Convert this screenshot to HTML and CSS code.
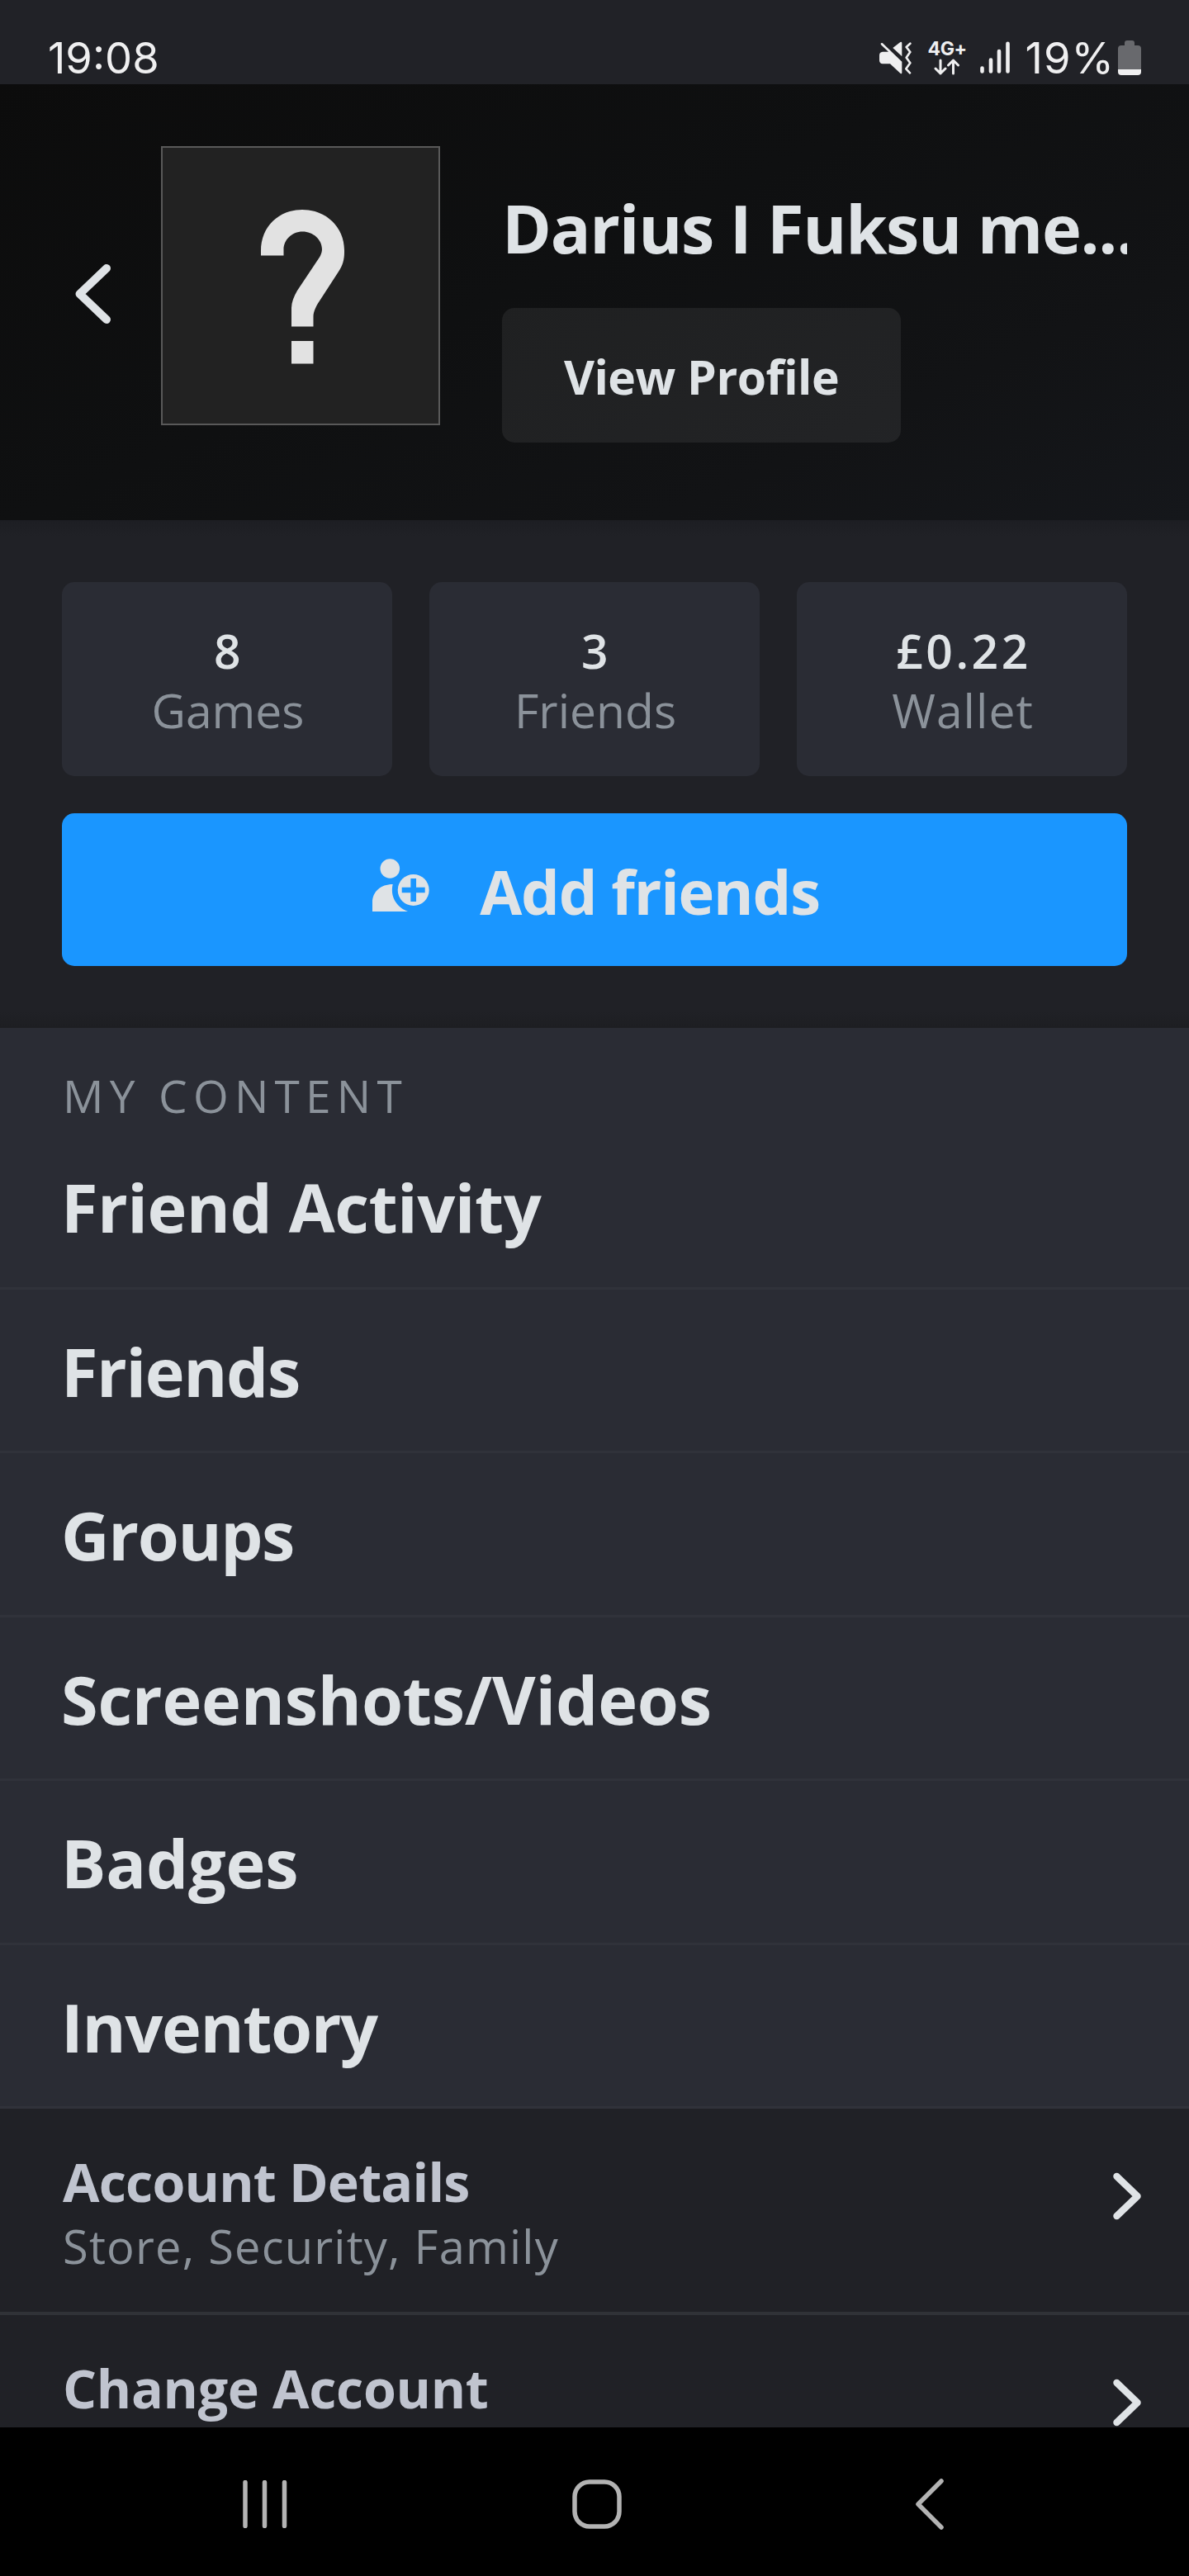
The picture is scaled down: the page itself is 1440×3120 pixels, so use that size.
FILE: index.html
```html
<!DOCTYPE html>
<html lang="en">
<head>
    <meta charset="UTF-8">
    <meta name="viewport" content="width=device-width, initial-scale=1.0">
    <title>Profile</title>
    <link rel="stylesheet" href="styles.css">
</head>
<body>
    <div class="screen">
        <div class="status-bar">
            <span class="clock">19:08</span>
            <div class="status-icons">
                <svg class="icon-mute" viewBox="75 58 120 120" width="40" height="40">
                    <path fill="#efeff0" d="M84 64Q86 63 90 68L157 132V173Q156 178 151 174L114 140H87Q75 139 75 127V109Q75 97 87 96H108L81 71Q78 64 84 64Z"/>
                    <path fill="#efeff0" d="M124 82L151 61Q156 58 157 64V113Z"/>
                    <path fill="none" stroke="#efeff0" stroke-width="8" stroke-linecap="round" stroke-linejoin="round" d="M187 66L173 79L187 97L173 117L187 137L172 158L186 173"/>
                </svg>
                <div class="network">
                    <span>4G+</span>
                    <svg viewBox="0 0 32 20" width="32" height="20">
                        <path fill="none" stroke="#efeff0" stroke-width="3" stroke-linecap="round" stroke-linejoin="round" d="M8 2V18M2 12L8 18L14 12M23.5 18V2M17.5 8L23.5 2L29.5 8"/>
                    </svg>
                </div>
                <svg class="icon-signal" viewBox="0 0 36 40" width="36" height="40">
                    <path fill="none" stroke="#efeff0" stroke-width="4.6" stroke-linecap="round" d="M2.5 32.5V36.5M13 22.5V36.5M23 12V36.5M33.5 2.8V36.5"/>
                </svg>
                <span class="battery-text">19%</span>
                <svg class="icon-battery" viewBox="0 0 28 42" width="28" height="42">
                    <path fill="#68696d" d="M8 6V3Q8 0 11 0H17Q20 0 20 3V6H24Q28 6 28 10V35H0V10Q0 6 4 6Z"/>
                    <path fill="#efeff0" d="M0 35H28V38Q28 42 24 42H4Q0 42 0 38Z"/>
                </svg>
            </div>
        </div>

        <header class="header">
            <svg class="back" viewBox="0 0 44 74" width="44" height="74">
                <path d="M38 6L5.5 37L38 68"/>
            </svg>
            <div class="avatar">
                <svg viewBox="0 0 102 188" width="102" height="188">
                    <path fill="#e2e2e2" d="M0 55.5V50C0 20 22 0 50 0C79 0 101 21 101 49V52C101 60 99 68 94 75L70 112C68 115 63.5 123 63.5 129V141.5H37V119C37 112 40 105 44 98L68 62C71 58 74 53 74 48C74 36 63 26.5 50.5 26.5C37 26.5 27.5 37 27.5 48V55.5Z"/>
                    <rect fill="#e2e2e2" x="37" y="159" width="26.5" height="27.5"/>
                </svg>
            </div>
            <div class="info">
                <div class="name">Darius I Fuksu me...</div>
                <button class="view-profile">View Profile</button>
            </div>
        </header>

        <main class="content">
            <section class="summary">
                <div class="stats">
                    <div class="stat">
                        <div class="stat-value">8</div>
                        <div class="stat-label">Games</div>
                    </div>
                    <div class="stat">
                        <div class="stat-value">3</div>
                        <div class="stat-label">Friends</div>
                    </div>
                    <div class="stat">
                        <div class="stat-value">£0.22</div>
                        <div class="stat-label wallet">Wallet</div>
                    </div>
                </div>
                <button class="add-friends">
                    <svg viewBox="0 0 69 64" width="69" height="64">
                        <circle fill="#dfe3e6" cx="21.3" cy="12" r="11.8"/>
                        <path fill="#dfe3e6" d="M0 64V53C0 40 10 31 24.7 31C21.5 45 28 58 43 64Z"/>
                        <circle fill="#dfe3e6" cx="49.7" cy="38" r="19"/>
                        <path stroke="#1a96ff" stroke-width="6.7" d="M35.7 38H63.7M49.7 24V52"/>
                    </svg>
                    <span>Add friends</span>
                </button>
            </section>

            <section class="my-content">
                <div class="section-title">MY CONTENT</div>
                <a class="row">Friend Activity</a>
                <a class="row tight">Friends</a>
                <a class="row tight">Groups</a>
                <a class="row wide">Screenshots/Videos</a>
                <a class="row wide">Badges</a>
                <a class="row tight">Inventory</a>
            </section>

            <section class="account">
                <a class="account-row">
                    <div>
                        <div class="account-title">Account Details</div>
                        <div class="account-sub">Store, Security, Family</div>
                    </div>
                    <svg class="arrow" viewBox="0 0 34 58" width="34" height="58">
                        <path d="M4.5 5L29.5 29L4.5 53"/>
                    </svg>
                </a>
                <a class="account-row">
                    <div>
                        <div class="account-title change">Change Account</div>
                    </div>
                    <svg class="arrow" viewBox="0 0 34 58" width="34" height="58">
                        <path d="M4.5 5L29.5 29L4.5 53"/>
                    </svg>
                </a>
            </section>
        </main>

        <nav class="nav-bar">
            <svg class="nav-recents" viewBox="0 0 54 58" width="54" height="58">
                <path d="M3 2.5V55.5M26.5 2.5V55.5M50.5 2.5V55.5"/>
            </svg>
            <svg class="nav-home" viewBox="0 0 60 60" width="60" height="60">
                <rect x="3" y="3" width="54" height="54" rx="18"/>
            </svg>
            <svg class="nav-back" viewBox="0 0 36 62" width="36" height="62">
                <path d="M32 3L4 31L32 59"/>
            </svg>
        </nav>
    </div>
</body>
</html>
```
FILE: styles.css
```css
* {
    box-sizing: border-box;
}
body {
    margin: 0;
    background: #000;
    font-family: "Open Sans", "Noto Sans", sans-serif;
    color: #dfe3e6;
}
button {
    border: none;
    font-family: inherit;
    color: inherit;
    cursor: pointer;
}
svg {
    display: block;
    flex-shrink: 0;
}
.screen {
    display: flex;
    flex-direction: column;
    width: 1440px;
    height: 3120px;
    overflow: hidden;
    background: #202126;
}

/* status bar */
.status-bar {
    display: flex;
    justify-content: space-between;
    align-items: center;
    flex-shrink: 0;
    height: 102px;
    padding: 37px 58px 0 58px;
    background: #212227;
    font-family: Inter, Roboto, sans-serif;
    font-size: 52.5px;
    line-height: 60px;
    color: #efeff0;
}
.status-icons {
    display: flex;
    align-items: center;
}
.network {
    display: flex;
    flex-direction: column;
    align-items: center;
    margin-left: 19px;
    font-size: 23px;
    font-weight: 700;
    line-height: 22px;
    letter-spacing: -0.5px;
}
.network svg {
    margin-top: 1px;
}
.icon-signal {
    margin-left: 16px;
}
.battery-text {
    margin-left: 19px;
    letter-spacing: 1px;
}
.icon-battery {
    margin-left: 4px;
}

/* profile header */
.header {
    display: flex;
    align-items: flex-start;
    flex-shrink: 0;
    height: 528px;
    padding: 75px 75px 0 91px;
    background: linear-gradient(155deg, #0c0c0c 0%, #0f1011 45%, #121315 75%, #15171b 100%);
}
.back {
    margin-top: 142px;
    fill: none;
    stroke: #dfe3e6;
    stroke-width: 10;
    stroke-linecap: round;
    stroke-linejoin: round;
}
.avatar {
    display: flex;
    width: 338px;
    height: 338px;
    margin-left: 60px;
    padding: 75px 0 0 119px;
    border: 2px solid #595959;
    background: #222;
}
.info {
    flex: 1;
    min-width: 0;
    margin-left: 75px;
    padding-top: 49px;
}
.name {
    overflow: hidden;
    white-space: nowrap;
    font-size: 81px;
    font-weight: 700;
    line-height: 100px;
    letter-spacing: -1.3px;
}
.view-profile {
    display: block;
    width: 483px;
    height: 163px;
    margin-top: 47px;
    padding: 2px 0 0;
    border-radius: 15px;
    background: rgba(255, 255, 255, 0.07);
    font-size: 57px;
    font-weight: 700;
    letter-spacing: -0.5px;
}

.content {
    flex: 1;
    min-height: 0;
    overflow: hidden;
}

/* stats and add friends */
.summary {
    height: 615px;
    padding: 75px;
    background: linear-gradient(#1d1e23, #202126 20px, #202126 595px, #1d1e22);
}
.stats {
    display: flex;
    gap: 45px;
}
.stat {
    flex: 1;
    height: 235px;
    padding-top: 47px;
    border-radius: 15px;
    background: #2a2c34;
    text-align: center;
    font-size: 57px;
    line-height: 72px;
}
.stat-value {
    padding-left: 4px;
    font-weight: 600;
    letter-spacing: 3.5px;
}
.stat-label {
    padding-left: 2px;
    color: #8b929a;
}
.wallet {
    letter-spacing: 1px;
}
.add-friends {
    display: flex;
    align-items: center;
    justify-content: center;
    gap: 61px;
    width: 100%;
    height: 185px;
    margin-top: 45px;
    padding: 4px 0 0 4px;
    border-radius: 15px;
    background: #1a96ff;
    font-size: 74px;
    font-weight: 700;
    letter-spacing: -1.2px;
}
.add-friends svg {
    margin-bottom: 15px;
}

/* my content */
.my-content {
    height: 1309px;
    padding-top: 46px;
    background: #2a2c34;
}
.section-title {
    padding-left: 76px;
    font-size: 55px;
    line-height: 72px;
    letter-spacing: 7.2px;
    color: #8b929a;
}
.row {
    display: flex;
    align-items: center;
    height: 198.5px;
    padding: 2px 74px 0;
    border-bottom: 3px solid #30323a;
    font-size: 81px;
    font-weight: 700;
    letter-spacing: -0.5px;
}
.tight {
    letter-spacing: -1.4px;
}
.wide {
    letter-spacing: -0.2px;
}

/* account */
.account-row {
    display: flex;
    justify-content: space-between;
    align-items: flex-start;
    height: 250px;
    padding: 48px 58px 0 76px;
    border-bottom: 4px solid #303237;
}
.account-title {
    font-size: 64.5px;
    font-weight: 700;
    line-height: 80px;
    letter-spacing: -0.8px;
    color: #c0c4cf;
}
.change {
    letter-spacing: -0.3px;
}
.account-sub {
    margin-top: 4px;
    font-size: 56px;
    line-height: 68px;
    letter-spacing: 1.2px;
    color: #8b929a;
}
.arrow {
    margin-top: 29px;
    fill: none;
    stroke: #dfe3e6;
    stroke-width: 8.5;
    stroke-linecap: round;
    stroke-linejoin: round;
}

/* system navigation */
.nav-bar {
    display: flex;
    align-items: center;
    flex-shrink: 0;
    height: 180px;
    padding: 5px 0 0 294px;
    background: #000;
    fill: none;
    stroke: #b3b3b3;
    stroke-width: 5.5;
    stroke-linecap: round;
    stroke-linejoin: round;
}
.nav-home {
    margin-left: 345px;
}
.nav-back {
    margin-left: 355px;
}
```
